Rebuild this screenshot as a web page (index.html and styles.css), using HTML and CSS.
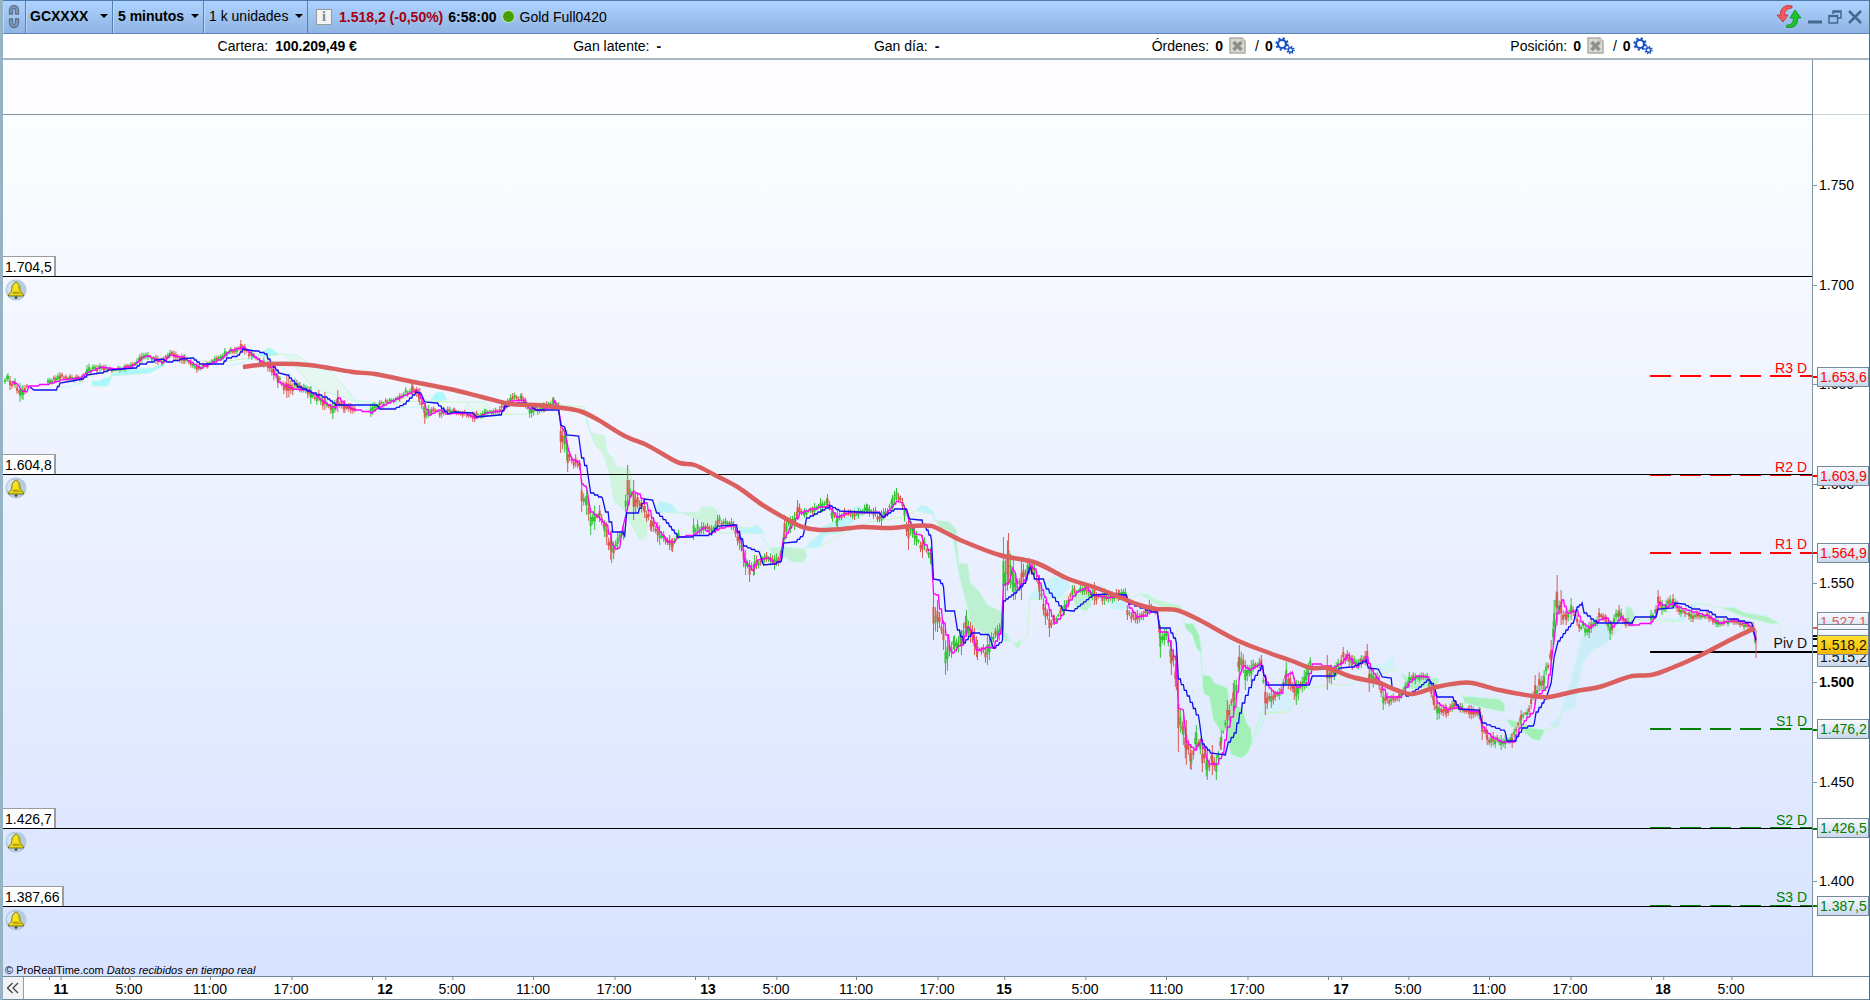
FILE: index.html
```
<!DOCTYPE html>
<html lang="es">
<head>
    <meta charset="UTF-8">
    <meta name="viewport" content="width=device-width, initial-scale=1.0">
    <title>Gold Full0420</title>
    <link rel="stylesheet" href="styles.css">
</head>
<body>
    <!-- shared icons -->
    <svg class="sprite" aria-hidden="true">
        <symbol id="bell" viewBox="0 0 24 24">
            <circle cx="12" cy="12" r="11.5" fill="#b4cddd"/>
            <circle cx="10" cy="11" r="8" fill="#d3e2ec"/>
            <path d="M12 3.5c1.2 0 1.7.7 1.8 1.5 2 .9 2.6 2.900 2.700 5.500.1 3.200 1 4.500 3.800 6.500v1.500H3.700V17c2.800-2 3.700-3.300 3.800-6.500.1-2.600.7-4.600 2.700-5.500.100-.8.600-1.500 1.800-1.500z" fill="#f4e31c" stroke="#6b6420" stroke-width="1"/>
            <path d="M14.500 7c1 2.500.5 6 3.500 9H8" fill="none" stroke="#c9b200" stroke-width="1.500"/>
            <path d="M8.500 14.500h6.500" stroke="#8a7c10"/>
            <path d="M10.500 19h3v1.500l-1.500 1.500-1.500-1.500z" fill="#4c4820"/>
        </symbol>
        <symbol id="cancel" viewBox="0 0 17 17">
            <path d="M1 1h12l3 3v12H1z" fill="#d9d9d2" stroke="#adada5" stroke-width="1.500"/>
            <path d="M13 1v3h3" fill="#f4f4f0" stroke="#adada5"/>
            <path d="M4.500 5l8 8M12.500 5l-8 8" stroke="#8f8f8a" stroke-width="3.500"/>
        </symbol>
        <symbol id="gears" viewBox="0 0 20 18">
            <g fill="none" stroke="#1450c0">
                <circle cx="7" cy="7" r="4" stroke-width="2.200"/>
                <circle cx="7" cy="7" r="5.700" stroke-width="2" stroke-dasharray="2.200 2.276"/>
                <circle cx="15.500" cy="13" r="2.200" stroke-width="1.400"/>
                <circle cx="15.500" cy="13" r="3.600" stroke-width="1.400" stroke-dasharray="1.400 1.427"/>
            </g>
        </symbol>
    </svg>

    <header class="toolbar">
        <button class="cell link" aria-label="Vincular">
            <svg width="14" height="28" viewBox="0 0 14 28" fill="none">
                <path d="M4 11H2.500V7a4.500 4.500 0 0 1 9 0v4H8.500V7a1.500 1.500 0 0 0-3 0v4zM4 16H2.500v4a4.500 4.500 0 0 0 9 0v-4H8.500v4a1.500 1.500 0 0 1-3 0v-4z" fill="#7f9ab8" stroke="#5c7390" stroke-width="1.300"/>
            </svg>
        </button>
        <label class="cell first bold"><select aria-label="Instrumento"><option>GCXXXX</option></select></label>
        <label class="cell bold"><select aria-label="Periodo"><option>5 minutos</option></select></label>
        <label class="cell"><select aria-label="Unidades"><option>1 k unidades</option></select></label>
        <div class="quote">
            <button class="info" aria-label="Información">i</button>
            <b class="price">1.518,2 (-0,50%)</b>
            <b>6:58:00</b>
            <span class="dot"></span>
            <span>Gold Full0420</span>
        </div>
        <div class="window">
            <button aria-label="Actualizar">
                <svg width="26" height="24" viewBox="0 0 26 24">
                    <path d="M16 1C8-1 4 4 4.500 10H1l6 7 5-7H8.500C8.500 6 11 3.500 16 3z" fill="#f4595c" stroke="#c02a30" stroke-width=".8"/>
                    <path d="M10 22c8 2 12-2 11.500-9H25l-6-8-5 8h3.500C17.500 18 15 20 11 20z" fill="#1fc32c" stroke="#0b8a18" stroke-width=".8"/>
                </svg>
            </button>
            <button aria-label="Minimizar">
                <svg width="14" height="14"><path d="M0 12h14" stroke="#46688f" stroke-width="3"/></svg>
            </button>
            <button aria-label="Restaurar">
                <svg width="14" height="14" fill="none" stroke="#46688f">
                    <path d="M5 4V1h8v7h-3M5 2h8" stroke-width="1.500"/><path d="M1 5.500h8.500v7.500H1zM1 6.500h8" stroke-width="1.500"/>
                </svg>
            </button>
            <button aria-label="Cerrar">
                <svg width="14" height="14"><path d="M1 1l12 12M13 1L1 13" stroke="#46688f" stroke-width="2.500"/></svg>
            </button>
        </div>
    </header>

    <section class="account">
        <div class="item">Cartera: <b>100.209,49 €</b></div>
        <div class="item">Gan latente: <b>-</b></div>
        <div class="item">Gan día: <b>-</b></div>
        <div class="item tight">Órdenes: <b>0</b>
            <button aria-label="Cancelar órdenes"><svg width="17" height="17"><use href="#cancel"/></svg></button>
            <span class="slash">/</span><b>0</b><button class="gear" aria-label="Sistemas"><svg width="20" height="18"><use href="#gears"/></svg></button>
        </div>
        <div class="item tight">Posición: <b>0</b>
            <button aria-label="Cerrar posición"><svg width="17" height="17"><use href="#cancel"/></svg></button>
            <span class="slash">/</span><b>0</b><button class="gear" aria-label="Sistemas"><svg width="20" height="18"><use href="#gears"/></svg></button>
        </div>
    </section>

    <div class="spare"><div class="spare-plot"></div><div class="spare-axis"></div></div>

    <main class="chart">
        <div class="plot" id="plot">
            <svg class="series" id="series" viewBox="3 115 1810 861" preserveAspectRatio="none"></svg>
            <p class="credit">© ProRealTime.com <i>Datos recibidos en tiempo real</i></p>
        </div>
        <div class="axis" id="axis"></div>
    </main>

    <footer class="times">
        <button class="back" aria-label="Retroceder">
            <svg width="12" height="12" fill="none" stroke="#444" stroke-width="1.300"><path d="M5.500 1l-5 5 5 5M11 1L6 6l5 5"/></svg>
        </button>
        <div class="scale" id="scale"></div>
    </footer>

    <script src="chart.js"></script>
</body>
</html>
```
FILE: styles.css
```
* {
    box-sizing: border-box;
}
body {
    margin: 0;
    height: 100vh;
    display: flex;
    flex-direction: column;
    border-left: 3px solid #94b3c3;
    border-right: 1px solid #4f6f82;
    background: #fff;
    color: #000;
    font: 14px/16px "Liberation Sans", Arial, sans-serif;
    overflow: hidden;
}
button {
    border: 0;
    padding: 0;
    background: none;
    font: inherit;
    color: inherit;
    display: flex;
    align-items: center;
    justify-content: center;
}
.sprite {
    position: absolute;
    width: 0;
    height: 0;
}

/* top bar */
.toolbar {
    height: 34px;
    display: flex;
    border-top: 1px solid #4f7bb3;
    border-bottom: 1px solid #5f86b8;
    background: linear-gradient(#afd3ff, #90b4e3);
}
.cell {
    display: flex;
    align-items: center;
    justify-content: space-between;
    gap: 6px;
    padding: 0 4px 2px 5px;
    border-right: 1px solid #5480b6;
    box-shadow: inset 1px 0 #b9d7fb;
}
.link {
    width: 23px;
    justify-content: center;
    padding: 0;
}
.first {
    min-width: 87px;
    padding-left: 4px;
}
.bold,
.bold select {
    font-weight: bold;
}
.cell select {
    appearance: none;
    border: 0;
    padding: 0;
    background: none;
    font: inherit;
    color: inherit;
}
label.cell::after {
    content: "";
    border: 4px solid transparent;
    border-top-color: #000;
    border-bottom: 0;
}
.quote {
    flex: 1;
    display: flex;
    align-items: center;
    gap: 5px;
    padding: 0 0 1px 8px;
}
.info {
    width: 16px;
    height: 16px;
    margin-right: 2px;
    border: 1px solid #9a9a9a;
    background: #f3f3f3;
    color: #7c8794;
    font: bold 14px/14px "Liberation Serif", serif;
}
.price {
    color: #a50010;
}
.dot {
    width: 13px;
    height: 13px;
    border-radius: 50%;
    border: 1px solid #cfe8c8;
    background: #46a000;
}
.window {
    display: flex;
    align-items: center;
    gap: 6px;
    padding-right: 7px;
}

/* account line */
.account {
    height: 26px;
    display: grid;
    grid-template-columns: 356fr 301fr 278fr 359fr 359fr;
    align-items: center;
    padding: 0 0 1px 11.5%;
    border-bottom: 2px solid #a9b8c2;
}
.item {
    display: flex;
    align-items: center;
    gap: 7px;
}
.tight {
    gap: 6px;
}
.slash {
    margin-left: 3px;
}
.gear {
    margin-left: -4px;
}

/* chart */
.spare,
.chart {
    display: grid;
    grid-template-columns: 1fr 56px;
}
.spare {
    height: 55px;
}
.spare-plot {
    border-right: 1px solid #7d94a3;
    border-bottom: 1px solid #7d94a3;
    background: #fdfdff;
}
.spare-axis {
    border-bottom: 1px solid #c4d2dc;
}
.chart {
    flex: 1;
    min-height: 0;
}
.plot {
    position: relative;
    border-right: 1px solid #7d94a3;
    background: linear-gradient(#fcfdff, #d8e3ff);
}
.series {
    position: absolute;
    width: 100%;
    height: 100%;
}
.axis {
    position: relative;
}
.level {
    position: absolute;
    left: 0;
    height: 20px;
    margin-top: -20px;
    padding: 2px;
    border: solid #9c9c9c;
    border-width: 1px 2px 0 0;
    background: #fff;
}
.bell {
    position: absolute;
    left: 2px;
    margin-top: 3px;
}
.pivot {
    position: absolute;
    right: 5px;
    margin-top: -17px;
}
.credit {
    position: absolute;
    left: 2px;
    bottom: 0;
    margin: 0;
    font-size: 11px;
    line-height: 12px;
}
.tick {
    position: absolute;
    left: 0;
    padding-left: 6px;
    margin-top: -8px;
}
.tick::before {
    content: "";
    position: absolute;
    left: 0;
    top: 8px;
    width: 4px;
    border-top: 1px solid #7d94a3;
}
.mark {
    position: absolute;
    left: 0;
    width: 5px;
    border-top: 2px solid;
    margin-top: -1px;
}
.tag {
    position: absolute;
    left: 4px;
    right: 0;
    height: 20px;
    margin-top: -11px;
    padding: 1px 2px;
    border: 1px solid #76899a;
    background: linear-gradient(#f8faff, #cbd8ee);
}
.last {
    background: linear-gradient(#ffe030, #f5b800);
}
.red { color: #ff0000; }
.rose { color: #dc5f5f; }
.green { color: #008000; }
.black { color: #111; }

/* time scale */
.times {
    height: 24px;
    display: flex;
    border-top: 1px solid #6f8796;
    border-bottom: 1px solid #6f8796;
}
.back {
    width: 21px;
    border-right: 1px solid #8fa0ac;
    background: #f0f2f4;
}
.scale {
    flex: 1;
    position: relative;
}
.time {
    position: absolute;
    top: 4px;
    transform: translateX(-50%);
}
.time::before,
.notch {
    content: "";
    position: absolute;
    left: 50%;
    top: -4px;
    height: 3px;
    border-left: 1px solid #6f8796;
}
.notch {
    top: 0;
}
.day {
    font-weight: bold;
}
```
FILE: chart.js
```
const TOP = 115, HEIGHT = 861;
const SCALE_LEFT = 24, SCALE_WIDTH = 1845;

const plot = document.getElementById('plot');
const axis = document.getElementById('axis');
const scale = document.getElementById('scale');
const series = document.getElementById('series');

const priceY = p => 682.4 + (1500 - p) * 1.989;
const topOf = p => (priceY(p) - TOP) / HEIGHT * 100 + '%';

function add(parent, cls, text, style) {
    const el = document.createElement('div');
    el.className = cls;
    el.textContent = text;
    Object.assign(el.style, style);
    parent.appendChild(el);
    return el;
}

function shape(name, attrs) {
    const el = document.createElementNS('http://www.w3.org/2000/svg', name);
    for (const key in attrs) el.setAttribute(key, attrs[key]);
    series.appendChild(el);
}

const parse = points => points.split(' ').map(p => p.split(',').map(Number));

// breaks long slopes into small stairs
function stairs(points, step) {
    const list = parse(points);
    let d = 'M' + list[0];
    for (let i = 1; i < list.length; i++) {
        const [x0, y0] = list[i - 1], [x1, y1] = list[i];
        const n = Math.max(1, Math.min(Math.round((x1 - x0) / step), Math.round(Math.abs(y1 - y0) / 2)));
        for (let k = 1; k <= n; k++) {
            const x = x0 + (x1 - x0) * k / n, y = y0 + (y1 - y0) * k / n;
            if (n > 1) d += `H${(x - 1).toFixed(1)}`;
            d += `L${x.toFixed(1)} ${y.toFixed(1)}`;
        }
    }
    return d;
}

// smooth curve through all points
function curve(points) {
    const p = parse(points);
    let d = 'M' + p[0];
    for (let i = 0; i < p.length - 1; i++) {
        const a = p[i - 1] || p[i], b = p[i], c = p[i + 1], e = p[i + 2] || c;
        const third = (c[0] - b[0]) / 3;
        const s1 = c[0] === a[0] ? 0 : (c[1] - a[1]) / (c[0] - a[0]);
        const s2 = e[0] === b[0] ? 0 : (e[1] - b[1]) / (e[0] - b[0]);
        d += `C${b[0] + third} ${b[1] + s1 * third} ${c[0] - third} ${c[1] - s2 * third} ${c}`;
    }
    return d;
}

// ---- cloud ----
const clouds = [
    ['#a8f8ff', '92,381 100,381 104,378 109,378 112,374 127,370 153,368 163,363 167,361 163,366 150,373 112,376 108,386 92,386'],
    ['#a8f8ff', '255,355 263,353 267,348 272,349 279,354 265,357'],
    ['#a8f8ff', '430,401 437,392 444,393 447,400'],
    ['#b8f6ff', '537,403 552,403 552,407 537,407'],
    ['#e6f6f0', '283,354 297,355 310,364 330,371 345,387 355,400 380,403 360,404 345,397 325,392 310,384 300,372 290,360'],
    ['#e6f6f0', '469,402 485,402 492,410 480,415 465,408'],
    ['#d0f4dc', '585,407 587,423 592,433 605,436 607,452 613,458 617,467 630,469 636,500 650,512 646,538 640,540 632,525 625,510 615,502 609,470 603,452 595,445 590,430'],
    ['#bdf3ff', '655,512 660,501 667,503 673,505 677,511 682,513'],
    ['#cdf3da', '682,513 699,512 702,507 712,507 718,511 720,527 715,535 708,534 702,520'],
    ['#bdf3ff', '740,527 750,528 757,525 762,529 765,534 741,533'],
    ['#c4f0d4', '763,537 770,548 783,547 806,549 807,557 803,562 793,562 785,557 775,557'],
    ['#bdf3ff', '807,548 810,542 820,535 823,527 840,520 850,510 860,506 867,513 855,520 840,533 825,535 820,547'],
    ['#bdf3ff', '917,510 922,505 928,507 934,512 935,515'],
    ['#bdf0d0', '933,513 935,520 950,522 957,530 959,563 968,564 971,583 980,592 988,605 1003,612 1004,633 990,635 978,630 971,623 967,603 960,577 953,535 940,527'],
    ['#bdf0d0', '1003,633 1008,633 1010,641 1018,643 1022,638 1020,647 1018,648 1013,642 1004,641'],
    ['#c8f2fd', '1030,595 1047,582 1052,577 1067,579 1070,587 1060,598 1030,599'],
    ['#bdf0d0', '1075,594 1090,592 1092,606 1087,611 1077,608 1074,600'],
    ['#c8f2fd', '1110,600 1127,597 1130,605 1122,610 1112,608'],
    ['#c4f5d0', '1140,594 1147,594 1157,600 1182,606 1183,610 1160,606'],
    ['#a2f0b6', '1185,623 1194,624 1200,635 1202,650 1203,675 1211,676 1215,683 1228,688 1230,703 1243,708 1247,722 1252,730 1253,743 1248,754 1242,758 1232,755 1228,742 1227,730 1222,732 1214,720 1210,697 1204,693 1201,652 1197,648 1193,635 1186,628'],
    ['#d6effd', '1253,740 1262,713 1265,700 1287,693 1293,692 1290,710 1267,713 1260,733'],
    ['#d2f2fb', '1370,663 1383,665 1393,657 1395,667 1380,673'],
    ['#b4f0c8', '1402,673 1410,678 1440,678 1438,685 1423,688 1410,689 1405,680'],
    ['#aaf0be', '1463,696 1500,699 1505,703 1506,712 1490,709 1465,703'],
    ['#a2f0b6', '1507,719 1520,722 1533,728 1546,730 1540,741 1533,739 1523,730 1512,727'],
    ['#ccecfc', '1550,725 1560,718 1572,680 1582,640 1590,623 1617,623 1618,632 1608,643 1593,650 1583,663 1575,707 1563,712 1559,727'],
    ['#b8efca', '1627,607 1632,607 1635,615 1635,622 1626,620'],
    ['#c8f2fd', '1660,618 1678,620 1687,606 1700,603 1692,612 1682,622'],
    ['#b4efc6', '1723,608 1733,607 1747,613 1767,616 1780,623 1773,624 1753,619 1740,615']
];
clouds.forEach(([fill, points]) => shape('polygon', { points, fill, stroke: '#c6f6e6' }));

const spans = [
    ['#c6f8c6', '167,361 200,361 227,361 283,354'],
    ['#c6f8c6', '380,403 428,401 447,402 469,402'],
    ['#c6f8c6', '492,415 530,414 537,403 585,407'],
    ['#c6f8c6', '720,533 740,533'],
    ['#c6f8c6', '820,547 840,535 870,522 905,517 917,510'],
    ['#c6f8c6', '1018,648 1028,636 1030,600 1060,598 1075,594'],
    ['#c6f8c6', '1092,600 1110,600 1130,600 1140,594'],
    ['#c6f8c6', '1183,610 1185,623'],
    ['#c6f8c6', '1253,740 1263,713 1290,712 1300,690 1330,685 1350,685 1365,678 1402,669'],
    ['#c6f8c6', '1440,681 1460,690 1463,696'],
    ['#c6f8c6', '1546,730 1559,727'],
    ['#c6f8c6', '1618,632 1627,620 1652,620 1678,622'],
    ['#c6f8c6', '1700,603 1723,608'],
    ['#c6f8c6', '1780,623 1782,637'],
    ['#c4f6ff', '60,388 72,386 88,381'],
    ['#c4f6ff', '227,366 245,362 255,355'],
    ['#c4f6ff', '265,357 280,365 300,383 315,390 328,400 345,405 375,408 430,407']
];
spans.forEach(([stroke, points]) => shape('polyline', { points, stroke, fill: 'none' }));

// ---- alert levels and daily pivots ----
const levels = [[1704.5, '1.704,5'], [1604.8, '1.604,8'], [1426.7, '1.426,7'], [1387.66, '1.387,66']];
const pivots = [
    ['R3 D', 1653.6, 'red'], ['R2 D', 1603.9, 'red'], ['R1 D', 1564.9, 'red'],
    ['Piv D', 1515.2, 'black'],
    ['S1 D', 1476.2, 'green'], ['S2 D', 1426.5, 'green'], ['S3 D', 1387.5, 'green']
];
pivots.forEach(([name, price, color]) => {
    const y = Math.floor(priceY(price));
    shape('path', {
        d: `M1651 ${y}H1813`, stroke: color, 'stroke-width': 2,
        'stroke-dasharray': name === 'Piv D' ? 'none' : '21 9'
    });
    add(plot, 'pivot ' + color, name, { top: topOf(price) });
});
levels.forEach(([price, text]) => {
    shape('path', { d: `M3 ${Math.round(priceY(price)) + .5}H1813`, stroke: '#000' });
    add(plot, 'level', text, { top: topOf(price) });
    add(plot, 'bell', '', { top: topOf(price) }).innerHTML =
        '<svg width="22" height="22"><use href="#bell"/></svg>';
});

// ---- candles: x, high, low; null is a gap between sessions ----
const range = [
    [5,378,384],[8,373,382],[10,376,390],[15,378,388],[20,383,402],[23,385,400],[28,382,388],null,
    [48,378,385],[60,372,382],[80,376,382],[87,365,378],[100,363,372],[112,368,373],[125,364,372],[133,362,368],
    [140,354,364],[148,352,360],[162,358,366],[170,350,358],[185,354,364],[197,363,373],[208,362,368],[215,356,363],
    [225,348,358],[237,347,354],[241,340,352],[252,350,360],[270,362,372],[278,370,388],[287,376,398],[300,382,392],
    [311,386,404],[325,392,410],[333,402,419],[338,390,412],[345,400,413],[356,406,413],null,
    [371,404,417],[380,400,408],[400,393,402],[413,382,395],[420,388,405],[425,404,424],[432,407,414],[442,406,418],
    [455,408,414],[475,412,422],[486,409,416],[500,406,415],[511,394,405],[522,393,402],[530,404,418],[545,403,412],
    [554,397,404],[559,402,415],[561,420,453],[567,430,460],[568,445,472],[580,460,470],[582,480,512],[587,486,515],
    [591,508,535],[600,505,522],[605,520,537],[612,530,563],[618,532,550],[624,525,540],[628,465,510],[634,480,520],
    [638,492,508],[645,500,518],[652,515,532],[660,525,545],[670,535,550],[673,538,552],[680,522,540],null,
    [694,518,540],[702,522,534],[712,525,536],[718,515,530],[732,518,530],[740,530,550],[746,550,575],[750,560,582],
    [755,555,575],[767,552,562],[775,555,570],[782,550,562],[785,515,540],[795,512,530],[798,500,520],[805,508,518],
    [815,503,516],[828,494,508],[833,508,522],[838,510,527],[845,508,518],[855,510,520],[868,504,514],[882,510,526],
    [886,508,518],[893,495,510],[897,488,500],[903,498,510],[909,515,550],[915,525,545],[923,535,558],[932,548,565],
    [934,590,640],[938,600,632],[944,620,650],[946,640,675],[948,635,671],[955,635,652],[962,630,655],[967,610,635],
    [975,628,655],[978,640,660],[988,635,665],[998,625,642],[1003,610,640],[1004,537,610],[1009,533,585],[1014,560,600],
    [1022,560,600],[1028,558,580],[1033,560,575],[1040,575,600],[1046,600,625],[1050,610,637],[1055,615,625],
    [1065,600,615],[1073,585,600],[1085,585,595],[1095,582,605],[1105,588,605],[1120,590,600],[1126,588,600],
    [1128,605,620],[1138,610,624],[1150,600,615],[1158,610,615],[1161,625,658],[1167,628,640],[1172,640,675],
    [1177,650,690],[1179,680,752],[1184,715,745],[1187,720,765],[1192,750,770],[1197,725,748],[1203,745,772],
    [1208,750,780],[1213,745,775],[1217,755,780],[1222,730,750],[1228,700,730],[1235,680,710],[1240,645,680],
    [1246,660,690],[1252,660,682],[1262,655,670],[1266,680,715],[1272,690,708],[1280,688,700],[1287,662,685],
    [1297,680,705],[1305,670,690],[1312,648,680],null,
    [1328,655,690],[1335,665,680],[1342,655,670],[1344,647,662],[1353,655,670],[1362,655,668],[1368,644,665],
    [1370,665,692],[1380,675,690],[1384,690,710],[1392,695,705],[1400,690,702],[1410,672,687],[1428,673,680],
    [1435,695,710],[1438,700,720],[1447,705,718],[1455,700,710],[1470,705,718],[1481,708,720],[1483,715,740],
    [1488,730,745],[1502,735,750],[1513,733,748],[1522,710,725],[1530,705,715],[1536,675,705],[1545,670,690],
    [1552,640,670],[1555,600,640],[1558,575,625],[1562,590,625],[1567,610,625],[1572,598,620],[1580,620,632],
    [1590,622,638],[1600,608,622],[1607,615,625],[1611,620,640],[1620,605,622],[1627,618,628],[1635,620,628],null,
    [1652,610,625],[1657,605,617],[1659,590,610],[1663,600,615],[1674,594,608],[1680,605,615],[1692,610,622],
    [1710,612,622],[1717,618,627],[1735,618,625],[1745,622,630],[1754,622,632],[1757,640,658]
];

let seed = 7;
function random() {
    seed = (seed * 16807) % 2147483647;
    return seed / 2147483647;
}

const wicks = { up: '', down: '' };
const bodies = { up: '', down: '' };
for (let i = 0; i < range.length - 1; i++) {
    const a = range[i], b = range[i + 1];
    if (!a || !b) continue;
    for (let x = a[0]; x < b[0]; x += 2) {
        const t = (x - a[0]) / (b[0] - a[0]);
        const high = a[1] + (b[1] - a[1]) * t;
        const low = a[2] + (b[2] - a[2]) * t;
        const span = low - high;
        const edge = x === a[0] ? 0 : .5;
        const y1 = high + span * edge * random() - (edge ? 1 : 0);
        const y2 = low - span * edge * random() + (edge ? 1 : 0);
        const rising = b[1] + b[2] < a[1] + a[2];
        const dir = (random() < .7) === rising ? 'up' : 'down';
        wicks[dir] += `M${x} ${y1.toFixed(1)}V${y2.toFixed(1)}`;
        const third = (y2 - y1) / 3;
        bodies[dir] += `M${x} ${(y1 + third).toFixed(1)}V${(y2 - third).toFixed(1)}`;
    }
}
shape('path', { d: wicks.up, stroke: '#35c435' });
shape('path', { d: wicks.down, stroke: '#d85a50' });
shape('path', { d: bodies.up, stroke: '#35c435', 'stroke-width': 2 });
shape('path', { d: bodies.down, stroke: '#d85a50', 'stroke-width': 2 });
shape('path', { d: 'M1757 630V658', stroke: '#d85a50' });

// ---- moving lines ----
const fast = '12,382 18,385 22,391 27,392 29,386 50,383 60,380 80,378 88,372 100,367 117,369 133,365 142,358 148,356 162,363 170,355 182,357 200,368 213,362 222,358 230,350 243,347 252,355 263,363 271,367 278,382 292,389 307,390 317,397 328,405 336,409 338,398 345,405 354,410 371,413 379,407 400,397 416,390 421,398 429,415 439,410 446,414 464,413 475,418 486,413 502,411 511,401 525,400 529,408 536,410 553,406 555,401 559,410 562,427 565,432 569,451 573,460 580,463 582,484 587,488 591,512 598,517 606,525 612,543 616,549 620,548 623,528 627,512 630,498 634,491 638,494 645,503 652,518 660,532 668,542 675,542 678,537 695,534 703,528 710,534 720,528 733,525 740,538 745,562 752,570 758,560 768,558 775,564 780,562 784,538 793,523 800,513 810,509 828,505 837,517 850,512 863,513 880,512 883,517 892,507 897,501 903,503 907,512 910,522 915,534 922,535 925,545 932,555 934,593 937,595 943,623 950,647 953,653 958,647 962,645 968,627 973,633 977,650 987,647 993,648 1002,627 1004,585 1010,582 1013,568 1016,573 1018,588 1025,580 1031,565 1035,569 1040,583 1045,597 1050,610 1055,623 1062,615 1070,600 1077,592 1087,587 1092,595 1107,598 1125,596 1130,608 1137,617 1145,616 1152,609 1158,613 1161,632 1167,632 1172,650 1177,663 1179,708 1184,710 1187,742 1195,750 1201,740 1207,757 1210,764 1217,764 1223,753 1228,727 1235,707 1240,677 1244,666 1250,670 1262,663 1265,677 1270,688 1275,693 1282,693 1287,675 1293,672 1297,687 1307,683 1313,664 1333,668 1342,663 1348,655 1357,667 1367,657 1372,670 1380,682 1387,697 1400,697 1410,682 1417,676 1428,677 1433,687 1438,703 1448,710 1455,708 1480,713 1483,727 1492,737 1502,742 1513,742 1520,728 1528,717 1535,710 1537,697 1547,687 1552,663 1555,640 1558,613 1563,600 1568,613 1577,610 1582,622 1590,628 1600,620 1607,618 1613,627 1622,617 1630,625 1652,622 1657,615 1660,603 1667,607 1674,602 1678,607 1693,612 1710,617 1720,623 1733,620 1750,625 1753,627 1757,642';
const slow = '30,387 34,390 55,390 60,383 72,381 82,379 87,375 100,373 108,370 135,368 140,364 155,360 163,359 167,362 180,359 192,358 200,364 222,364 227,358 238,355 243,349 255,351 265,354 271,364 279,373 287,375 298,387 312,393 328,399 336,405 377,405 380,409 393,409 404,404 416,392 421,393 425,402 436,403 448,414 454,412 473,413 477,417 500,415 505,406 516,403 525,403 536,410 559,410 561,425 565,427 567,435 579,436 582,458 588,473 591,493 603,499 606,512 613,532 623,532 625,536 627,513 637,513 645,499 653,500 657,513 667,523 678,537 710,534 718,526 735,525 744,546 760,553 764,565 773,564 782,560 784,543 795,542 804,534 807,518 830,506 840,511 880,513 883,517 895,509 907,509 910,519 920,520 927,530 932,540 934,579 939,580 944,587 946,611 955,611 958,630 964,643 972,633 990,636 994,648 1003,640 1004,601 1015,593 1027,580 1030,568 1035,579 1044,579 1047,589 1063,610 1073,611 1093,595 1107,594 1127,595 1130,604 1152,612 1158,612 1160,628 1169,628 1177,643 1179,679 1188,696 1200,721 1203,744 1211,753 1226,755 1229,742 1235,733 1243,703 1253,680 1262,666 1267,685 1310,685 1313,676 1333,676 1340,668 1352,667 1367,660 1369,668 1379,669 1383,677 1392,678 1393,689 1407,696 1420,687 1428,680 1435,687 1438,697 1452,697 1460,709 1480,710 1483,723 1506,732 1508,741 1515,741 1523,728 1535,724 1537,712 1543,703 1548,695 1552,683 1555,657 1559,641 1567,630 1575,620 1578,607 1583,603 1585,613 1592,619 1598,623 1633,623 1636,617 1657,617 1659,609 1674,608 1676,603 1684,604 1693,609 1710,612 1717,617 1740,621 1753,624 1757,640';
const average = '243,367 270,364 309,365 353,372 375,374 414,382 450,389 482,397 511,404 536,405 563,408 580,411 597,419 625,436 647,445 663,454 680,463 695,465 717,476 738,487 763,505 787,519 803,527 820,530 843,529 863,527 890,528 913,526 932,526 943,531 963,541 1000,555 1037,563 1067,578 1100,589 1120,597 1140,605 1157,609 1177,610 1200,620 1237,640 1270,653 1293,661 1312,668 1328,668 1353,677 1380,683 1397,690 1413,694 1437,687 1460,683 1473,683 1500,690 1533,696 1550,697 1577,691 1600,687 1633,676 1652,675 1670,669 1700,656 1733,639 1756,628';
shape('path', { d: stairs(fast, 3), fill: 'none', stroke: '#ff00ff', 'stroke-width': 1.3 });
shape('path', { d: stairs(slow, 3), fill: 'none', stroke: '#1010f0', 'stroke-width': 1.3 });
shape('path', { d: curve(average), fill: 'none', stroke: '#dc5f5f', 'stroke-width': 4.5 });

// ---- price axis ----
[1750, 1700, 1650, 1600, 1550, 1500, 1450, 1400].forEach(p => {
    const text = '1.' + String(p).slice(1);
    add(axis, p === 1500 ? 'tick day' : 'tick', text, { top: topOf(p) });
});

// price, text, colour, price where the tag is placed
const tags = [
    [1653.6, '1.653,6', 'red', 1653.1], [1603.9, '1.603,9', 'red', 1603.4], [1564.9, '1.564,9', 'red', 1564.4],
    [1476.2, '1.476,2', 'green', 1475.9], [1426.5, '1.426,5', 'green', 1426.2], [1387.5, '1.387,5', 'green', 1387.2],
    [1527.1, '1.527,1', 'rose', 1529.8], [1523.1, '', 'black', 1523.7], [1521.6, '', 'black', 1521.5],
    [1515.2, '1.515,2', 'black', 1512.3], [1518.2, '1.518,2', 'black last', 1518.2]
];
tags.forEach(([price, text, color, slot]) => {
    add(axis, 'mark ' + color.split(' ')[0], '', { top: topOf(price) });
    add(axis, 'tag ' + color, text, { top: topOf(slot) });
});

// ---- time axis ----
const times = [
    [61, '11'], [129, '5:00'], [210, '11:00'], [291, '17:00'],
    [385, '12'], [452, '5:00'], [533, '11:00'], [614, '17:00'],
    [708, '13'], [776, '5:00'], [856, '11:00'], [937, '17:00'],
    [1004, '15'], [1085, '5:00'], [1166, '11:00'], [1247, '17:00'],
    [1341, '17'], [1408, '5:00'], [1489, '11:00'], [1570, '17:00'],
    [1663, '18'], [1731, '5:00']
];
const leftOf = x => (x - SCALE_LEFT) / SCALE_WIDTH * 100 + '%';
times.forEach(([x, text]) => {
    add(scale, text.includes(':') ? 'time' : 'time day', text, { left: leftOf(x) });
});
[49, 372, 695, 1328, 1651].forEach(x => add(scale, 'notch', '', { left: leftOf(x) }));
```
